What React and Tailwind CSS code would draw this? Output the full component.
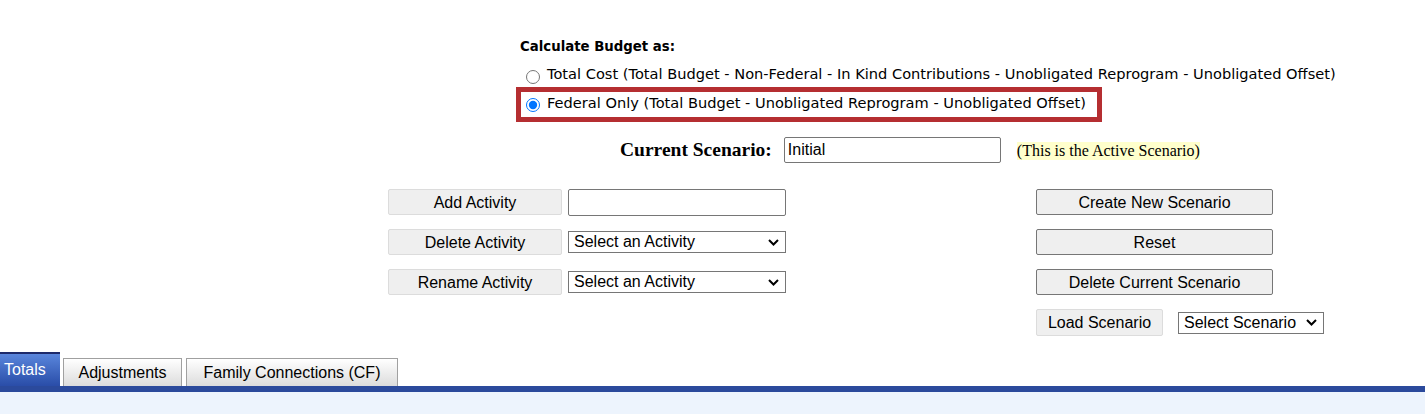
import React, { useState } from 'react';

const LEFT_ACTIONS = [
  { label: 'Add Activity', field: 'input' },
  { label: 'Delete Activity', field: 'select' },
  { label: 'Rename Activity', field: 'select' },
];

const RIGHT_ACTIONS = ['Create New Scenario', 'Reset', 'Delete Current Scenario'];

function Chevron() {
  return (
    <svg width="11" height="7" viewBox="0 0 11 7" className="pointer-events-none">
      <path d="M1 1l4.5 4.5L10 1" fill="none" stroke="#000" strokeWidth="2" />
    </svg>
  );
}

function FakeSelect({ value, className }) {
  return (
    <div
      className={`flex items-center justify-between border border-[#767676] bg-white pl-[5px] pr-[6px] text-[16px] leading-none text-black ${className}`}
    >
      <span>{value}</span>
      <Chevron />
    </div>
  );
}

export default function App() {
  const [basis, setBasis] = useState('federal');
  const [scenario, setScenario] = useState('Initial');
  const [activity, setActivity] = useState('');

  return (
    <div className="h-[414px] w-[1425px] overflow-hidden bg-white font-['Liberation_Sans',Arial,sans-serif]">
      <div className="pt-[39px]">
        <div className="ml-[520px] font-['DejaVu_Sans',Tahoma,sans-serif] text-[14.6px] text-black">
          <div className="h-[16px] text-[13.3px] font-bold leading-[16px]">Calculate Budget as:</div>
          <label className="mt-[11px] flex h-[16px] items-center">
            <input
              type="radio"
              name="basis"
              checked={basis === 'total'}
              onChange={() => setBasis('total')}
              className="ml-[6px] mr-[7px] mt-[5px] h-[14px] w-[14px]"
            />
            <span className="leading-[16px]">
              Total Cost (Total Budget - Non-Federal - In Kind Contributions - Unobligated Reprogram - Unobligated Offset)
            </span>
          </label>
          <div className="-ml-[4px] mt-[5px] w-[586px] border-[5px] border-[#b52e31] pb-[5px] pt-[1px]">
            <label className="flex h-[19px] items-center">
              <input
                type="radio"
                name="basis"
                checked={basis === 'federal'}
                onChange={() => setBasis('federal')}
                className="ml-[5px] mr-[7px] mt-[5px] h-[14px] w-[14px]"
              />
              <span className="leading-[16px]">
                Federal Only (Total Budget - Unobligated Reprogram - Unobligated Offset)
              </span>
            </label>
          </div>
        </div>

        <div className="mt-[15px] flex h-[26px] items-center">
          <span className="ml-[620px] font-['Liberation_Serif','Times_New_Roman',serif] text-[19.5px] font-bold text-black">
            Current Scenario:
          </span>
          <input
            value={scenario}
            onChange={(e) => setScenario(e.target.value)}
            className="ml-[12px] h-[26px] w-[217px] rounded-[2px] border border-[#767676] px-[3px] text-[16px] text-black outline-none"
          />
          <span className="ml-[16px] mt-[2px] bg-[#ffffcc] font-['Liberation_Serif','Times_New_Roman',serif] text-[16px] leading-[18px] text-black">
            (This is the Active Scenario)
          </span>
        </div>

        <div className="mt-[26px] flex">
          <div className="ml-[388px] flex flex-col gap-[14px]">
            {LEFT_ACTIONS.map((a) => (
              <div key={a.label} className="flex h-[26px] items-center gap-[6px]">
                <button className="h-[26px] w-[174px] rounded-[2px] border border-[#dcdcdc] bg-[#efefef] pt-[1px] text-[16px] text-black">
                  {a.label}
                </button>
                {a.field === 'input' ? (
                  <input
                    value={activity}
                    onChange={(e) => setActivity(e.target.value)}
                    className="h-[27px] w-[218px] rounded-[2px] border border-[#767676] px-[3px] text-[16px] outline-none"
                  />
                ) : (
                  <FakeSelect value="Select an Activity" className="h-[22px] w-[218px]" />
                )}
              </div>
            ))}
          </div>

          <div className="ml-[250px] flex flex-col gap-[14px]">
            {RIGHT_ACTIONS.map((label) => (
              <button
                key={label}
                className="h-[26px] w-[237px] rounded-[2px] border border-[#767676] bg-[#efefef] pt-[1px] text-[16px] text-black"
              >
                {label}
              </button>
            ))}
            <div className="flex h-[27px] items-center">
              <button className="h-[27px] w-[127px] rounded-[2px] border border-[#dcdcdc] bg-[#efefef] pt-[1px] text-[16px] text-black">
                Load Scenario
              </button>
              <FakeSelect value="Select Scenario" className="ml-[15px] h-[22px] w-[146px] gap-[3px] pl-[5px] pr-[4px]" />
            </div>
          </div>
        </div>
      </div>

      <div className="mt-[16px]">
        <div className="flex items-end gap-[3px]">
          <div className="flex h-[34px] w-[60px] items-center border-t-2 border-[#1d2a6b] bg-gradient-to-b from-[#5a86dc] to-[#2a4da8] pl-[4px] text-[16px] text-white">
            Totals
          </div>
          <div className="flex h-[28px] w-[119px] items-center justify-center border border-b-0 border-[#a0a0a0] bg-gradient-to-b from-white to-[#dcdcdc] text-[16px] text-black">
            Adjustments
          </div>
          <div className="ml-[1px] flex h-[28px] w-[212px] items-center justify-center border border-b-0 border-[#a0a0a0] bg-gradient-to-b from-white to-[#dcdcdc] text-[16px] text-black">
            Family Connections (CF)
          </div>
        </div>
        <div className="h-[6px] bg-[#2b4a9c]" />
        <div className="h-[40px] bg-[#edf4fd]" />
      </div>
    </div>
  );
}
